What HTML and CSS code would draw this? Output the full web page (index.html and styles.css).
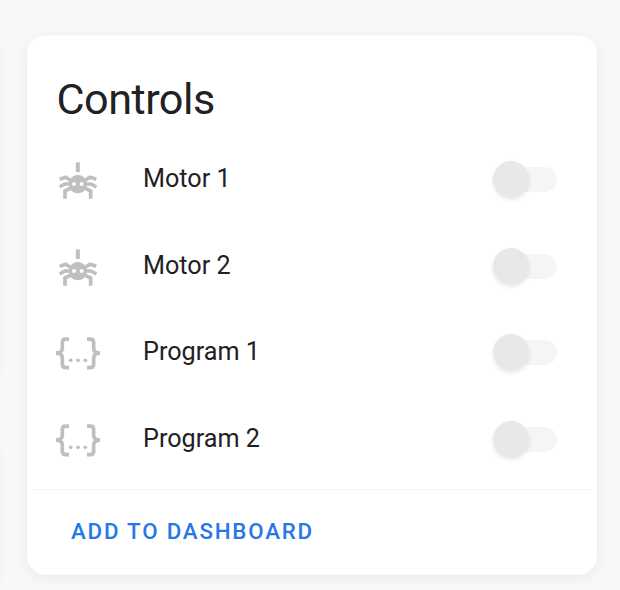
FILE: index.html
```html
<!DOCTYPE html>
<html lang="en">
<head>
<meta charset="utf-8">
<title>Controls</title>
<link rel="stylesheet" href="styles.css">
</head>
<body>
<svg class="defs" width="0" height="0" aria-hidden="true">
  <symbol id="spider" viewBox="48 24 132 132">
    <path d="M113.500 37V66" stroke-width="12"/>
    <path d="M95 93L77 82L59 88M91 102H74L59 111M95 113L75 123V146M132 93L150 82L169 88M136 102H153L169 111M132 113L152 123V146" stroke-width="11"/>
    <path class="fill" fill-rule="evenodd" d="M113.500 75C130 75 140 88 140 103C140 118 130 130 113.500 130S87 118 87 103C87 88 97 75 113.500 75ZM102 96A6 6 0 1 0 102 108A6 6 0 1 0 102 96ZM125 96A6 6 0 1 0 125 108A6 6 0 1 0 125 96Z"/>
  </symbol>
  <symbol id="braces" viewBox="48 19 132 132">
    <path d="M87 43.500H77Q67 43.500 67 54V71Q67 85 48 85.500Q67 86 67 100V118Q67 129 77 129H87M141 43.500H151Q161 43.500 161 54V71Q161 85 180 85.500Q161 86 161 100V118Q161 129 151 129H141" stroke-width="11"/>
    <path class="fill" d="M48 80H54V91H48ZM174 80H180V91H174Z"/>
    <circle class="fill" cx="92" cy="107" r="5.500"/>
    <circle class="fill" cx="114" cy="107" r="5.500"/>
    <circle class="fill" cx="136" cy="107" r="5.500"/>
  </symbol>
</svg>
<div class="page">
  <div class="previous"><div class="panel first"></div><div class="panel second"></div></div>
  <main class="card">
    <h1 class="title">Controls</h1>
    <div class="rows">
      <div class="row"><svg class="icon"><use href="#spider"/></svg><span class="name">Motor 1</span><span class="toggle"><span class="thumb"></span></span></div>
      <div class="row"><svg class="icon"><use href="#spider"/></svg><span class="name">Motor 2</span><span class="toggle"><span class="thumb"></span></span></div>
      <div class="row"><svg class="icon"><use href="#braces"/></svg><span class="name">Program 1</span><span class="toggle"><span class="thumb"></span></span></div>
      <div class="row"><svg class="icon"><use href="#braces"/></svg><span class="name">Program 2</span><span class="toggle"><span class="thumb"></span></span></div>
    </div>
    <div class="actions"><span class="button">ADD TO DASHBOARD</span></div>
  </main>
</div>
</body>
</html>
```
FILE: styles.css
```css
* { box-sizing: border-box; }
body {
  margin: 0;
  width: 620px;
  height: 590px;
  overflow: hidden;
  background: #f8f8f8;
  color: #212124;
  font-family: Roboto, sans-serif;
}
.defs { display: block; }
.page { display: flex; height: 590px; }
.previous {
  display: flex;
  flex-direction: column;
  gap: 58px;
  width: 26.5px;
  padding-top: 35px;
}
.panel {
  width: 40px;
  margin-left: -42px;
  border-radius: 18px;
  box-shadow: 0 3px 12px rgba(0, 0, 0, .05);
}
.first { height: 365px; }
.second { height: 160px; }
.card {
  display: flex;
  flex-direction: column;
  width: 570px;
  height: 540px;
  margin-top: 34.5px;
  border: 1px solid #fcfcfc;
  border-radius: 18px;
  background: #fff;
  box-shadow: 0 3px 14px rgba(0, 0, 0, .06);
}
.title {
  margin: 0;
  height: 101.4px;
  padding: 35px 29px 0;
  font-size: 43.2px;
  font-weight: 400;
  line-height: 58px;
  letter-spacing: -.52px;
}
.rows { height: 352px; padding: 0 38.5px 0 28.5px; }
.row { display: flex; align-items: center; height: 86.6px; }
.icon {
  width: 44px;
  height: 44px;
  margin-right: 43px;
  fill: none;
  stroke: #bdbfc1;
}
.fill { fill: #bdbfc1; stroke: none; }
.name {
  flex: 1;
  padding-bottom: 2px;
  font-size: 25.2px;
  line-height: 36px;
}
.toggle {
  display: flex;
  align-items: center;
  width: 64px;
  height: 25px;
  margin-bottom: 1px;
  border-radius: 13px;
  background: linear-gradient(90deg, transparent 18px, #f5f5f6 18px);
}
.thumb {
  width: 36px;
  height: 37px;
  flex: none;
  border-radius: 50%;
  background: #e6e8ea;
  box-shadow: 0 2px 4px rgba(0, 0, 0, .09);
}
.actions {
  flex: 1;
  padding: 23px 43.5px 0;
  border-top: 1px solid #f5f5f5;
}
.button {
  display: block;
  color: #2678e8;
  font-size: 22.3px;
  font-weight: 500;
  line-height: 36px;
  letter-spacing: 1.8px;
}
```
